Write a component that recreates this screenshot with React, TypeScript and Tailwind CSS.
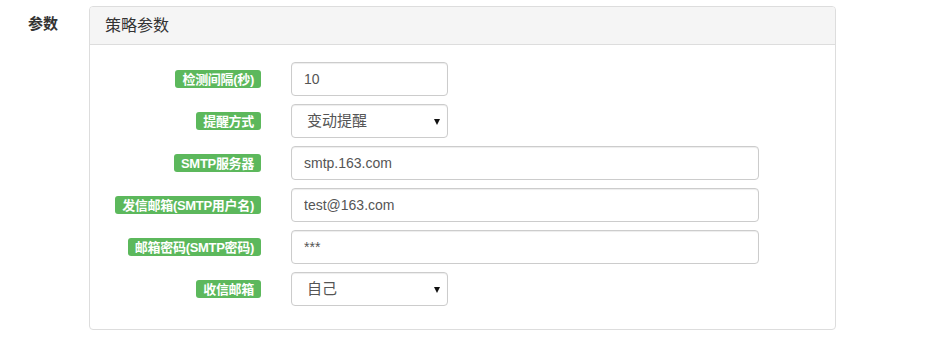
import React from "react";

const font = { fontFamily: '"Liberation Sans", "Noto Sans CJK SC", sans-serif' };

type Field = {
  label: string;
  value: string;
  kind: "input" | "select";
  wide?: boolean;
};

const fields: Field[] = [
  { label: "检测间隔(秒)", value: "10", kind: "input" },
  { label: "提醒方式", value: "变动提醒", kind: "select" },
  { label: "SMTP服务器", value: "smtp.163.com", kind: "input", wide: true },
  { label: "发信邮箱(SMTP用户名)", value: "test@163.com", kind: "input", wide: true },
  { label: "邮箱密码(SMTP密码)", value: "***", kind: "input", wide: true },
  { label: "收信邮箱", value: "自己", kind: "select" },
];

function Row({ field }: { field: Field }) {
  return (
    <div className="flex items-center h-[34px]">
      <div className="w-[171px] flex justify-end">
        <span className="h-[18px] px-[7px] flex items-center rounded-[3px] bg-[#5cb85c] text-white text-[13px] font-bold leading-none tracking-[-0.3px] whitespace-nowrap">
          {field.label}
        </span>
      </div>
      <div className="ml-[30px]">
        {field.kind === "input" ? (
          <input
            defaultValue={field.value}
            readOnly
            className={`${field.wide ? "w-[468px]" : "w-[157px]"} h-[34px] px-[12px] border border-[#ccc] rounded-[4px] bg-white text-[14px] text-[#555] shadow-[inset_0_1px_1px_rgba(0,0,0,0.075)] outline-none`}
            style={font}
          />
        ) : (
          <div className="relative w-[157px] h-[34px] border border-[#ccc] rounded-[4px] bg-white shadow-[inset_0_1px_1px_rgba(0,0,0,0.075)] flex items-center pl-[15px] text-[15px] text-[#555]">
            {field.value}
            <svg
              className="absolute right-[7px] top-[14px]"
              width="6"
              height="6"
              viewBox="0 0 6 6"
            >
              <path d="M0 0 L6 0 L3 6 Z" fill="#111" />
            </svg>
          </div>
        )}
      </div>
    </div>
  );
}

export default function App() {
  return (
    <div className="w-[936px] h-[358px] bg-white flex" style={font}>
      <div className="w-[89px] pl-[28px] pt-[13px] text-[15px] font-bold text-[#333]">
        参数
      </div>
      <div className="mt-[6px] w-[747px] h-[324px] border border-[#ddd] rounded-[4px] bg-white">
        <div className="h-[38px] bg-[#f5f5f5] border-b border-[#ddd] rounded-t-[3px] px-[15px] flex items-center text-[16px] text-[#333]">
          策略参数
        </div>
        <div className="pt-[17px] flex flex-col gap-[8px]">
          {fields.map((f) => (
            <Row key={f.label} field={f} />
          ))}
        </div>
      </div>
    </div>
  );
}
